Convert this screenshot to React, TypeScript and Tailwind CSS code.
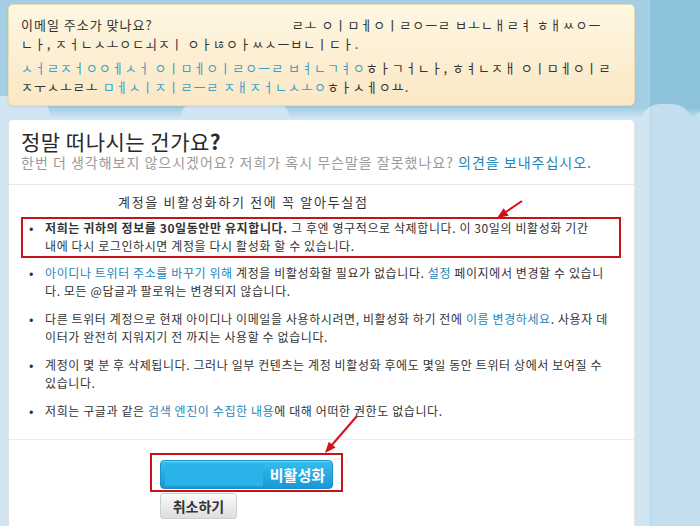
import React from 'react';

const link = 'text-[#1c86b8]';

const NoticeBox: React.FC = () => {
  // the jamo lines are how the page really rendered (broken composition)
  return (
    <div className="h-[102px] rounded-[5px] border border-[#efdcae] bg-[linear-gradient(to_bottom,#fdf7e3,#fbe7c4)] px-3 pt-[10px] text-[13px] leading-[19px] text-[#333] shadow-[0_1px_2px_rgba(0,0,0,0.08)]">
      <div className="mb-[5px]">
        <div className="whitespace-nowrap">
          <span className="tracking-[1px]">이메일 주소가 맞나요?</span>
          <span className="inline-block w-[139px]" />
          <span className="tracking-[1px]">ㄹㅗ ㅇㅣㅁㅔㅇㅣㄹㅇㅡㄹ ㅂㅗㄴㅐㄹㅕ ㅎㅐㅆㅇㅡ</span>
        </div>
        <div className="whitespace-nowrap tracking-[0.9px]">ㄴㅏ, ㅈㅓㄴㅅㅗㅇㄷㅚㅈㅣ ㅇㅏㄶㅇㅏㅆㅅㅡㅂㄴㅣㄷㅏ.</div>
      </div>
      <div className="tracking-[1px]">
        <div className="whitespace-nowrap">
          <span className="text-[#3aa0c9]">ㅅㅓㄹㅈㅓㅇㅇㅔㅅㅓ ㅇㅣㅁㅔㅇㅣㄹㅇㅡㄹ ㅂㅕㄴㄱㅕㅇ</span>ㅎㅏㄱㅓㄴㅏ, ㅎㅕㄴㅈㅐ ㅇㅣㅁㅔㅇㅣㄹ
        </div>
        <div className="whitespace-nowrap">
          ㅈㅜㅅㅗㄹㅗ <span className="text-[#3aa0c9]">ㅁㅔㅅㅣㅈㅣㄹㅡㄹ ㅈㅐㅈㅓㄴㅅㅗㅇ</span>ㅎㅏㅅㅔㅇㅛ.
        </div>
      </div>
    </div>
  );
};

const Bullet: React.FC<{ children: React.ReactNode }> = ({ children }) => (
  <li className="flex">
    <span className="w-[22px] shrink-0 pl-[6px] text-[13px] leading-[18px]">•</span>
    <div className="whitespace-nowrap tracking-[0.6px]">{children}</div>
  </li>
);

const App: React.FC = () => {
  return (
    <div className="relative h-[526px] w-[700px] overflow-hidden bg-[linear-gradient(to_bottom,#8dc2dd_0px,#8dc2dd_108px,#c3dfef_118px,#c3dfef_100%)] font-['Noto_Sans_CJK_KR',sans-serif] text-[#333]">
      {/* clouds */}
      <div className="absolute left-[640px] top-[104px] h-[40px] w-[52px] rounded-full bg-[#c3dfef]" />
      <div className="absolute left-[688px] top-[110px] h-[40px] w-[40px] rounded-full bg-[#c3dfef]" />
      <div className="absolute left-[-20px] top-[96px] h-[40px] w-[70px] rounded-full bg-[#c3dfef]" />
      <div className="absolute left-[180px] top-[100px] h-[40px] w-[110px] rounded-full bg-[#c3dfef]" />

      <div className="relative flex h-full">
        <div className="w-[650px] bg-white/20 pl-2 pr-[15px] pt-1">
          <NoticeBox />

          <div className="mt-[13px] h-[420px] rounded-t-[5px] border border-[#e3e3e3] bg-white">
            <div className="border-b border-[#e8e8e8] px-3 pb-[13px] pt-[9px]">
              <h2 className="text-[21px] leading-[24px] tracking-[0.5px] text-[#2a2a2a]">
                정말 떠나시는 건가요<span className="font-bold">?</span>
              </h2>
              <p className="whitespace-nowrap text-[14px] leading-[18px] tracking-[1px] text-[#9a9a9a]">
                한번 더 생각해보지 않으시겠어요? 저희가 혹시 무슨말을 잘못했나요? <span className={link}>의견을 보내주십시오.</span>
              </p>
            </div>

            <div className="border-b border-[#ececec] px-3 pb-[19px] pt-[9px] text-[12px] leading-[18px]">
              <div className="pl-[97px] text-[13px] leading-[16px] tracking-[1.7px]">계정을 비활성화하기 전에 꼭 알아두실점</div>

              <ul className="mt-[7px]">
                <li className="mr-[1px] border-2 border-[#c8121a] pb-[1px]">
                  <ul>
                    <Bullet>
                      <b>저희는 귀하의 정보를 30일동안만 유지합니다.</b> 그 후엔 영구적으로 삭제합니다. 이 30일의 비활성화 기간
                      <br />
                      내에 다시 로그인하시면 계정을 다시 활성화 할 수 있습니다.
                    </Bullet>
                  </ul>
                </li>
              </ul>
              <ul className="mt-[6px] flex flex-col gap-[10px] pl-[2px]">
                <Bullet>
                  <span className={link}>아이디나 트위터 주소를 바꾸기 위해</span> 계정을 비활성화할 필요가 없습니다. <span className={link}>설정</span> 페이지에서 변경할 수 있습니
                  <br />
                  다. 모든 @답글과 팔로워는 변경되지 않습니다.
                </Bullet>
                <Bullet>
                  다른 트위터 계정으로 현재 아이디나 이메일을 사용하시려면, 비활성화 하기 전에 <span className={link}>이름 변경하세요</span>. 사용자 데
                  <br />
                  이터가 완전히 지워지기 전 까지는 사용할 수 없습니다.
                </Bullet>
                <Bullet>
                  계정이 몇 분 후 삭제됩니다. 그러나 일부 컨텐츠는 계정 비활성화 후에도 몇일 동안 트위터 상에서 보여질 수
                  <br />
                  있습니다.
                </Bullet>
                <Bullet>
                  저희는 구글과 같은 <span className={link}>검색 엔진이 수집한 내용</span>에 대해 어떠한 권한도 없습니다.
                </Bullet>
              </ul>
            </div>

            <div className="px-3 pt-[13px]">
              <div className="ml-[129px] w-[193px] border-2 border-[#c8121a] px-[8px] pb-[1px] pt-[5px]">
                <button className="flex h-[29px] w-full items-center rounded-[4px] border border-[#1a92cc] bg-[linear-gradient(to_bottom,#36bdee,#1a98d4)] pl-[4px] pr-[7px] shadow-[inset_0_1px_0_rgba(255,255,255,0.35)]">
                  <span className="h-[22px] w-[98px] bg-[#2ab3e8]" />
                  <span className="ml-auto text-[15px] font-bold leading-none text-white">비활성화</span>
                </button>
              </div>
              <button className="ml-[139px] mt-[1px] h-[26px] w-[77px] rounded-[3px] border border-[#cfcfcf] bg-[linear-gradient(to_bottom,#fafafa,#dedede)] text-[14px] font-bold leading-none text-[#333]">
                취소하기
              </button>
            </div>
          </div>
        </div>
        <div className="flex-1 border-l border-[#9fc4d9]/40" />
      </div>

      {/* red annotation arrows */}
      <svg className="pointer-events-none absolute inset-0" width="700" height="526">
        <line x1="522" y1="201" x2="505" y2="212.5" stroke="#d4101a" strokeWidth="2" />
        <polygon points="497,218 508.7,215.7 503.7,208.2" fill="#d4101a" />
        <line x1="357" y1="416" x2="331" y2="446" stroke="#d4101a" strokeWidth="2" />
        <polygon points="325,453 335.6,447.5 328.8,441.7" fill="#d4101a" />
      </svg>
    </div>
  );
};

export default App;
